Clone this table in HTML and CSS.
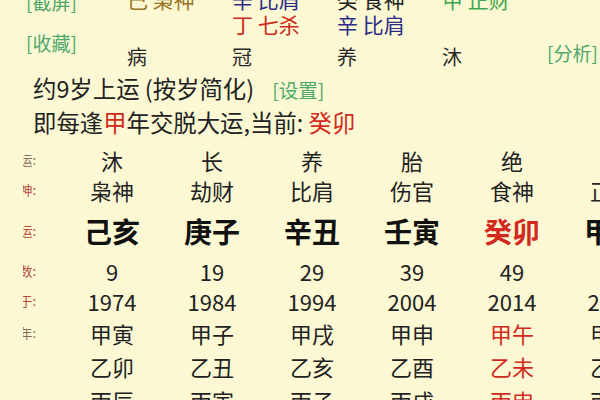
FILE: index.html
```html
<!DOCTYPE html>
<html lang="zh-CN">
<head>
<meta charset="utf-8">
<title>大运</title>
<link rel="stylesheet" href="styles.css">
</head>
<body>
<div class="page">
  <div class="top">
    <div class="links">
      <span class="link">[截屏]</span>
      <span class="link link-2">[收藏]</span>
    </div>
    <div class="hs earth">己 枭神</div>
    <div class="hs metal">辛 比肩</div>
    <div class="hs water">癸 食神</div>
    <div class="hs wood">甲 正财</div>
    <div class="hs"></div>
    <div class="hs"></div>
    <div class="hs fire">丁 七杀</div>
    <div class="hs metal">辛 比肩</div>
    <div class="hs"></div>
    <div class="hs"></div>
    <div class="cs">病</div>
    <div class="cs">冠</div>
    <div class="cs">养</div>
    <div class="cs">沐</div>
    <div class="link analyse">[分析]</div>
  </div>

  <div class="info">
    <div class="info-line l1">约9岁上运 (按岁简化)<span class="link set">[设置]</span></div>
    <div class="info-line l2">即每逢<span class="red">甲</span>年交脱大运,当前: <span class="red">癸卯</span></div>
  </div>

  <div class="tbl">
    <div class="row h30">
      <div class="lab gray"><span>星运:</span></div>
      <div class="c">沐</div><div class="c">长</div><div class="c">养</div><div class="c">胎</div><div class="c">绝</div><div class="c">墓</div>
    </div>
    <div class="row h30">
      <div class="lab"><span>十神:</span></div>
      <div class="c">枭神</div><div class="c">劫财</div><div class="c">比肩</div><div class="c">伤官</div><div class="c">食神</div><div class="c">正财</div>
    </div>
    <div class="row h52 gz">
      <div class="lab"><span>大运:</span></div>
      <div class="c">己亥</div><div class="c">庚子</div><div class="c">辛丑</div><div class="c">壬寅</div><div class="c red">癸卯</div><div class="c">甲辰</div>
    </div>
    <div class="row h28">
      <div class="lab"><span>岁数:</span></div>
      <div class="c">9</div><div class="c">19</div><div class="c">29</div><div class="c">39</div><div class="c">49</div><div class="c">59</div>
    </div>
    <div class="row h32">
      <div class="lab"><span>始于:</span></div>
      <div class="c">1974</div><div class="c">1984</div><div class="c">1994</div><div class="c">2004</div><div class="c">2014</div><div class="c">2024</div>
    </div>
    <div class="row h32">
      <div class="lab gray"><span>流年:</span></div>
      <div class="c">甲寅</div><div class="c">甲子</div><div class="c">甲戌</div><div class="c">甲申</div><div class="c red">甲午</div><div class="c">甲辰</div>
    </div>
    <div class="row h34">
      <div class="lab empty"></div>
      <div class="c">乙卯</div><div class="c">乙丑</div><div class="c">乙亥</div><div class="c">乙酉</div><div class="c red">乙未</div><div class="c">乙巳</div>
    </div>
    <div class="row h34">
      <div class="lab empty"></div>
      <div class="c">丙辰</div><div class="c">丙寅</div><div class="c">丙子</div><div class="c">丙戌</div><div class="c red">丙申</div><div class="c">丙午</div>
    </div>
  </div>
</div>
</body>
</html>
```

FILE: styles.css
```css
html, body {
  margin: 0;
  padding: 0;
  width: 600px;
  height: 400px;
  overflow: hidden;
  background: #fbf8d3;
}
body {
  font-family: "Noto Sans CJK SC", "Noto Sans", sans-serif;
  color: #1c1c1c;
}
.page {
  width: 600px;
  height: 400px;
  overflow: hidden;
}
.top {
  display: grid;
  grid-template-columns: 127px repeat(4, 105px) 1fr;
  grid-template-rows: 25px 25px 36px;
  margin-top: -13px;
  font-size: 21px;
  line-height: 25px;
}
.links {
  grid-row: 1 / span 3;
  display: flex;
  flex-direction: column;
  align-items: flex-start;
  padding-left: 26px;
  padding-top: 2px;
}
.link {
  color: #4ea86c;
  font-size: 19px;
  line-height: 25px;
  white-space: nowrap;
}
.link-2 {
  margin-top: 16px;
}
.hs {
  white-space: nowrap;
}
.earth { color: #9a7426; }
.metal { color: #2c2c86; }
.water { color: #222; }
.wood { color: #3fa84e; }
.fire { color: #cc2a20; }
.cs {
  align-self: center;
  color: #2a2a2a;
  font-size: 20px;
  padding-top: 2px;
}
.analyse {
  justify-self: end;
  align-self: start;
  margin-top: 3px;
  padding-right: 10px;
}
.info {
  padding-left: 33px;
  font-size: 23.4px;
  color: #222;
}
.info-line {
  white-space: nowrap;
}
.l1 {
  height: 30px;
  line-height: 30px;
}
.l2 {
  height: 38px;
  line-height: 38px;
}
.set {
  margin-left: 18px;
  font-size: 19.5px;
}
.red {
  color: #d2281e;
}
.tbl {
  margin-top: 4px;
  font-size: 22px;
  color: #222;
}
.row {
  display: grid;
  grid-template-columns: 62px repeat(6, 100px);
  align-items: center;
  white-space: nowrap;
}
.c {
  text-align: center;
}
.h28 { height: 28px; line-height: 28px; }
.h30 { height: 30px; line-height: 30px; }
.h32 { height: 32px; line-height: 32px; }
.h34 { height: 34px; line-height: 34px; }
.h52 { height: 52px; line-height: 52px; }
.gz {
  font-size: 28px;
  font-weight: 700;
  color: #111;
}
.gz .red {
  color: #d2281e;
}
.lab {
  margin-left: 23px;
  width: 13px;
  overflow: hidden;
  display: flex;
  justify-content: flex-end;
  font-size: 13px;
  font-weight: 400;
  color: #b24a36;
  line-height: 20px;
}
.lab.gray {
  color: #8a6a5a;
}
```
